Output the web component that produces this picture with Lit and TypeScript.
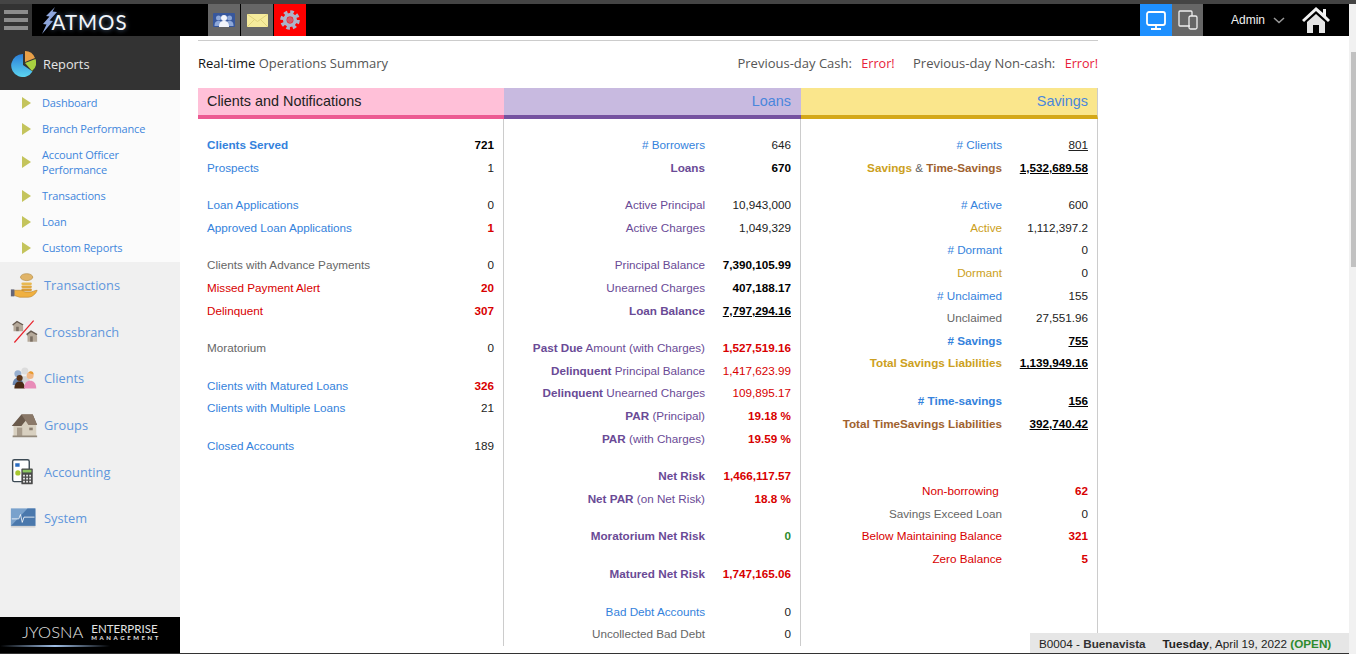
import { LitElement, html, css, svg } from 'lit'
import { customElement } from 'lit/decorators.js'

type Part = [string, string?]
type Row = { label?: Part[]; value?: string; v?: string; gap?: number }

const L = (text: string, cls = ''): Part[] => [[text, cls]]
const gap = (n = 1): Row => ({ gap: n })

const clients: Row[] = [
  { label: L('Clients Served', 'blue b'), value: '721', v: 'b' },
  { label: L('Prospects', 'blue'), value: '1' },
  gap(),
  { label: L('Loan Applications', 'blue'), value: '0' },
  { label: L('Approved Loan Applications', 'blue'), value: '1', v: 'red b' },
  gap(),
  { label: L('Clients with Advance Payments', 'gray'), value: '0' },
  { label: L('Missed Payment Alert', 'red'), value: '20', v: 'red b' },
  { label: L('Delinquent', 'red'), value: '307', v: 'red b' },
  gap(),
  { label: L('Moratorium', 'gray'), value: '0' },
  gap(),
  { label: L('Clients with Matured Loans', 'blue'), value: '326', v: 'red b' },
  { label: L('Clients with Multiple Loans', 'blue'), value: '21' },
  gap(),
  { label: L('Closed Accounts', 'blue'), value: '189' },
]

const loans: Row[] = [
  { label: L('# Borrowers', 'blue'), value: '646' },
  { label: L('Loans', 'purple b'), value: '670', v: 'b' },
  gap(),
  { label: L('Active Principal', 'purple'), value: '10,943,000' },
  { label: L('Active Charges', 'purple'), value: '1,049,329' },
  gap(),
  { label: L('Principal Balance', 'purple'), value: '7,390,105.99', v: 'b' },
  { label: L('Unearned Charges', 'purple'), value: '407,188.17', v: 'b' },
  { label: L('Loan Balance', 'purple b'), value: '7,797,294.16', v: 'b u' },
  gap(),
  { label: [['Past Due', 'purple b'], [' Amount (with Charges)', 'purple']], value: '1,527,519.16', v: 'red b' },
  { label: [['Delinquent', 'purple b'], [' Principal Balance', 'purple']], value: '1,417,623.99', v: 'red' },
  { label: [['Delinquent', 'purple b'], [' Unearned Charges', 'purple']], value: '109,895.17', v: 'red' },
  { label: [['PAR', 'purple b'], [' (Principal)', 'purple']], value: '19.18 %', v: 'red b' },
  { label: [['PAR', 'purple b'], [' (with Charges)', 'purple']], value: '19.59 %', v: 'red b' },
  gap(),
  { label: L('Net Risk', 'purple b'), value: '1,466,117.57', v: 'red b' },
  { label: [['Net PAR', 'purple b'], [' (on Net Risk)', 'purple']], value: '18.8 %', v: 'red b' },
  gap(),
  { label: L('Moratorium Net Risk', 'purple b'), value: '0', v: 'green b' },
  gap(),
  { label: L('Matured Net Risk', 'purple b'), value: '1,747,165.06', v: 'red b' },
  gap(),
  { label: L('Bad Debt Accounts', 'blue'), value: '0' },
  { label: L('Uncollected Bad Debt', 'gray'), value: '0' },
]

const savings: Row[] = [
  { label: L('# Clients', 'blue'), value: '801', v: 'u' },
  { label: [['Savings', 'gold b'], [' & ', 'gray'], ['Time-Savings', 'brown b']], value: '1,532,689.58', v: 'b u' },
  gap(),
  { label: L('# Active', 'blue'), value: '600' },
  { label: L('Active', 'gold'), value: '1,112,397.2' },
  { label: L('# Dormant', 'blue'), value: '0' },
  { label: L('Dormant', 'gold'), value: '0' },
  { label: L('# Unclaimed', 'blue'), value: '155' },
  { label: L('Unclaimed', 'gray'), value: '27,551.96' },
  { label: L('# Savings', 'blue b'), value: '755', v: 'b u' },
  { label: L('Total Savings Liabilities', 'gold b'), value: '1,139,949.16', v: 'b u' },
  gap(),
  { label: L('# Time-savings', 'blue b'), value: '156', v: 'b u' },
  { label: L('Total TimeSavings Liabilities', 'brown b'), value: '392,740.42', v: 'b u' },
  gap(3),
  { label: L('Non-borrowing\u00a0', 'red'), value: '62', v: 'red b' },
  { label: L('Savings Exceed Loan', 'gray'), value: '0' },
  { label: L('Below Maintaining Balance', 'red'), value: '321', v: 'red b' },
  { label: L('Zero Balance', 'red'), value: '5', v: 'red b' },
]

const subItems = ['Dashboard', 'Branch Performance', 'Account Officer Performance', 'Transactions', 'Loan', 'Custom Reports']

const navIcons: Record<string, unknown> = {
  Transactions: svg`
    <ellipse cx="19" cy="5" rx="7" ry="4" fill="#e0b468" stroke="#b08840" stroke-width=".7"/>
    <rect x="13" y="11" width="12" height="3" rx="1.500" fill="#e8b850"/>
    <rect x="13" y="14.500" width="12" height="3" rx="1.500" fill="#e0a840"/>
    <rect x="13" y="18" width="12" height="3" rx="1.500" fill="#d89c38"/>
    <path d="M5 20h7c3 0 4 2 6 2h5c3 0 5-2 8-2-1 4-6 8-10 8H11l-6-2z" fill="#f0b040" stroke="#b07820" stroke-width=".6"/>
    <rect x="1" y="19" width="4" height="8" fill="#667"/>`,
  Crossbranch: svg`
    <path d="M3 6l5-4 6 3 1 3v5H4V7z" fill="#b5a99a"/><path d="M3 6l5-4 7 4" fill="none" stroke="#665a50" stroke-width="1.600"/>
    <rect x="7" y="8" width="3" height="5" fill="#7a6e62"/>
    <path d="M19 17l5-4 6 3 1 3v6H20v-6z" fill="#b5a99a"/><path d="M19 17l5-4 7 4" fill="none" stroke="#665a50" stroke-width="1.600"/>
    <rect x="23" y="19" width="3" height="6" fill="#7a6e62"/>
    <path d="M5 26L27 1" stroke="#e8202a" stroke-width="1.400"/>`,
  Clients: svg`
    <circle cx="17" cy="6" r="4" fill="#dcdcdc"/><path d="M11 20c0-6 3-8 6-8s6 2 6 8z" fill="#d4d4d4"/>
    <circle cx="9" cy="9" r="4" fill="#98b0d0"/><path d="M3 22c0-6 3-8 6-8s6 2 6 8z" fill="#6a85ad"/>
    <circle cx="11" cy="14" r="3.500" fill="#5c3418"/><path d="M5 26c0-6 3-8 6-8s6 2 6 8z" fill="#4a2a14"/>
    <circle cx="23" cy="11" r="4" fill="#f0b888"/><path d="M21 8c2-3 6-2 6 2l-3-1z" fill="#e89a30"/>
    <path d="M16 26c0-6 3-9 7-9s7 3 7 9z" fill="#e88cb8"/>`,
  Groups: svg`
    <path d="M4 14L14 2h12l4 12v13H4z" fill="#d8d0c0"/>
    <path d="M2 15L13 2h13l5 12-4-1-5-9-9 11z" fill="#6a5a4c"/>
    <path d="M13 2h13l5 12H21z" fill="#8a7868"/>
    <rect x="8" y="17" width="6" height="10" fill="#a89c8c"/>
    <rect x="22" y="17" width="4" height="3" fill="#8a7e70"/>
    <rect x="3" y="26" width="28" height="2" fill="#948a7c"/>`,
  Accounting: svg`
    <rect x="3" y="0" width="19" height="25" rx="2" fill="#fff" stroke="#3c4a54" stroke-width="1.600"/>
    <rect x="6" y="4" width="5" height="4" fill="#2a6cc0"/>
    <circle cx="9" cy="15" r="3" fill="#a8c830"/>
    <rect x="13" y="10" width="13" height="18" rx="1" fill="#4a4a4a"/>
    <rect x="14.500" y="11.500" width="10" height="3" fill="#8cc860"/>
    <path d="M15 17h2v2h-2zM18.500 17h2v2h-2zM22 17h2v2h-2zM15 20.500h2v2h-2zM18.500 20.500h2v2h-2zM22 20.500h2v2h-2zM15 24h2v2h-2zM18.500 24h2v2h-2zM22 24h2v2h-2z" fill="#eee"/>`,
  System: svg`
    <rect x="1" y="3" width="28" height="20" fill="#7aa2cc"/>
    <path d="M1 23L20 3h9v20z" fill="#4a78ac"/>
    <path d="M2 15h8l2-5 2 9 2-6h12" fill="none" stroke="#fff" stroke-width=".9"/>
    <rect x="1" y="23" width="28" height="2" fill="#d4d4d4"/>`,
}

@customElement('app-root')
export class AppRoot extends LitElement {
  static styles = css`
    :host {
      display: flex;
      flex-direction: column;
      height: 654px;
      overflow: hidden;
      position: relative;
      background: #fff;
      font-family: 'Liberation Sans', Arial, sans-serif;
      font-size: 11.7px;
      color: #222;
    }

    .top-line {
      height: 4px;
      background: #444;
      flex: none;
    }

    .frame {
      flex: 1;
      display: flex;
      min-height: 0;
    }

    .page {
      flex: 1;
      display: flex;
      flex-direction: column;
      min-width: 0;
      border-bottom: 1px solid #333;
    }

    /* top bar */
    .topbar {
      height: 32px;
      flex: none;
      display: flex;
      align-items: stretch;
      background: #000;
    }

    .burger {
      width: 32px;
      background: #333;
      display: flex;
      flex-direction: column;
      justify-content: center;
      gap: 4px;
      padding: 0 4px;
      box-sizing: border-box;
    }

    .burger span {
      height: 4px;
      background: #8c8c8c;
    }

    .logo {
      width: 176px;
      display: flex;
      align-items: center;
      padding-left: 10px;
      box-sizing: border-box;
    }

    .logo-text {
      font-family: 'Lato', sans-serif;
      font-size: 20.5px;
      color: #f2f5fa;
      letter-spacing: 1px;
      margin-left: -5.5px;
      padding-top: 3px;
      text-shadow: 0 0 5px rgba(120, 150, 190, 0.8);
    }

    .tool {
      width: 32px;
      margin-right: 1px;
      background: #666;
      display: flex;
      align-items: center;
      justify-content: center;
    }

    .tool.alert {
      background: #f00;
    }

    .tool.on {
      background: #1e90ff;
      margin-right: 0;
    }

    .tool.narrow {
      width: 31px;
    }

    .spacer {
      flex: 1;
    }

    .admin {
      margin-left: 27px;
      width: 71px;
      display: flex;
      align-items: center;
      color: #f2f2f2;
      font-size: 12px;
      gap: 8px;
    }

    .home {
      width: 47px;
      display: flex;
      align-items: center;
    }

    /* body */
    .body {
      flex: 1;
      display: flex;
      min-height: 0;
    }

    .sidebar {
      width: 180px;
      flex: none;
      display: flex;
      flex-direction: column;
      background: #f0f0f0;
      font-family: 'Open Sans', sans-serif;
    }

    .section {
      height: 54px;
      flex: none;
      background: #333;
      color: #e6e6e6;
      display: flex;
      align-items: center;
      gap: 7px;
      padding: 1px 0 0 11px;
      box-sizing: border-box;
      font-size: 12.8px;
    }

    .subs {
      flex: none;
      background: #fbfbfb;
      padding-bottom: 1px;
    }

    .sub {
      display: flex;
      align-items: center;
      padding: 5px 10px 6px 22px;
      gap: 11px;
      font-size: 11px;
      letter-spacing: -0.15px;
      line-height: 15px;
      color: #3f86dc;
    }

    .tri {
      width: 0;
      height: 0;
      flex: none;
      border-left: 9px solid #c4c45c;
      border-top: 6px solid transparent;
      border-bottom: 6px solid transparent;
    }

    .nav {
      height: 46.6px;
      display: flex;
      align-items: center;
      padding-left: 10px;
      gap: 6px;
      font-size: 12.8px;
      color: #5f96dc;
      box-sizing: border-box;
    }

    .brand {
      margin-top: auto;
      height: 36px;
      flex: none;
      background: #000;
      color: #e4e4e4;
      display: flex;
      align-items: flex-start;
      gap: 8px;
      padding: 5px 0 0 22px;
      box-sizing: border-box;
      font-family: 'Lato', sans-serif;
      font-weight: 300;
      position: relative;
    }

    .brand-name {
      font-size: 16.5px;
      line-height: 20px;
    }

    .brand-sub {
      font-size: 11.5px;
      font-weight: 400;
      line-height: 12px;
      padding-top: 1px;
    }

    .brand-sub small {
      display: block;
      font-size: 6px;
      font-weight: bold;
      letter-spacing: 2.6px;
      line-height: 6px;
    }

    .brand-glow {
      position: absolute;
      left: 0;
      bottom: 6px;
      width: 110px;
      height: 2px;
      background: linear-gradient(90deg, #000, #a0c0e8 50%, #000);
    }

    /* main content */
    .main {
      flex: 1;
      min-width: 0;
      padding: 4px 0 0 18px;
    }

    .content {
      width: 900px;
      border-top: 1px solid #ccc;
    }

    .summary {
      height: 47px;
      display: flex;
      align-items: flex-start;
      justify-content: space-between;
      padding-top: 13px;
      box-sizing: border-box;
      font-family: 'Open Sans', sans-serif;
      font-size: 13px;
      line-height: 18px;
      color: #555;
    }

    .summary b {
      font-weight: 400;
      color: #111;
    }

    .summary em {
      font-style: normal;
      font-size: 12.6px;
      color: #e8203a;
      margin: 0 15px 0 6px;
    }

    .summary em:last-child {
      margin-right: 0;
    }

    .columns {
      display: grid;
      grid-template-columns: 306px 297px 297px;
    }

    .head {
      height: 31px;
      box-sizing: border-box;
      border-bottom: 4px solid;
      display: flex;
      align-items: center;
      justify-content: flex-end;
      padding: 0 10px 2px 9px;
      font-size: 14.4px;
      color: #4a86dc;
    }

    .head.pink {
      background: #ffc0d8;
      border-color: #ec5a92;
      justify-content: flex-start;
      color: #222;
    }

    .head.lilac {
      background: #c8bae0;
      border-color: #7552a0;
    }

    .head.yellow {
      background: #fae68c;
      border-color: #d4a818;
      border-right: 1px solid #ccc;
      padding-right: 9px;
    }

    .col {
      height: 527px;
      padding: 14.3px 9px 0;
      box-sizing: border-box;
      border-right: 1px solid #ccc;
    }

    .row {
      height: 22.6px;
      display: flex;
      align-items: center;
      justify-content: space-between;
      white-space: pre;
    }

    .col.right .row {
      justify-content: flex-end;
    }

    .col.right .val {
      width: 86px;
      text-align: right;
    }

    .val {
      color: #222;
    }

    .val.b, .val.b.u {
      color: #000;
    }

    .b {
      font-weight: bold;
    }

    .u {
      text-decoration: underline;
    }

    .blue { color: #3482dc; }
    .gray { color: #666; }
    .red, .val.red { color: #d80000; }
    .purple { color: #6a4a96; }
    .gold { color: #cca020; }
    .brown { color: #a0622e; }
    .green, .val.green { color: #2e8b2e; }

    .scrollbar {
      width: 7px;
      flex: none;
      background: #f1f1f1;
      padding: 48px 0 0 2px;
      box-sizing: border-box;
    }

    .thumb {
      height: 215px;
      background: #c1c1c1;
    }

    .status {
      position: absolute;
      right: 7px;
      bottom: 1px;
      width: 319px;
      height: 20px;
      box-sizing: border-box;
      background: #e6e6e6;
      padding-left: 9px;
      display: flex;
      align-items: center;
      gap: 17px;
      color: #222;
      white-space: pre;
    }

    .status .green {
      font-weight: bold;
    }

    .status .name {
      font-weight: bold;
      color: #333;
    }
  `

  private renderRows(rows: Row[]) {
    return rows.map((r) => {
      if (r.gap) return html`<div style="height:${r.gap * 15}px"></div>`
      return html`<div class="row">
        <span>${(r.label ?? []).map(([t, c]) => html`<span class=${c ?? ''}>${t}</span>`)}</span>
        <span class="val ${r.v ?? ''}">${r.value}</span>
      </div>`
    })
  }

  render() {
    return html`
      <div class="top-line"></div>
      <div class="frame">
        <div class="page">
          <div class="topbar">
            <div class="burger"><span></span><span></span><span></span></div>
            <div class="logo">
              <svg width="15" height="27" viewBox="0 0 15 27"><path d="M13 0L4 9l3.500.5L1 17l3.500.5L0 27 11 14l-3.500-.5L15 5l-4.500-.5z" fill="#8ea6dc"/></svg>
              <span class="logo-text">ATMOS</span>
            </div>
            <div class="tool">
              <svg width="22" height="14" viewBox="0 0 22 14">
                <rect width="22" height="14" rx="1" fill="#37579c"/>
                <circle cx="5.500" cy="5" r="2.500" fill="#8ea8d8"/><path d="M1.500 13c0-4 1.500-5 4-5s4 1 4 5z" fill="#8ea8d8"/>
                <circle cx="16.500" cy="5" r="2.500" fill="#8ea8d8"/><path d="M12.500 13c0-4 1.500-5 4-5s4 1 4 5z" fill="#8ea8d8"/>
                <circle cx="11" cy="5" r="3" fill="#f4f6fc"/><path d="M6 14c0-5 2-6 5-6s5 1 5 6z" fill="#f4f6fc"/>
              </svg>
            </div>
            <div class="tool">
              <svg width="21" height="13" viewBox="0 0 21 13">
                <rect width="21" height="13" fill="#f5eb9c"/>
                <path d="M0 0l10.500 7.500L21 0M0 13l7.500-7.500M21 13l-7.500-7.500" fill="none" stroke="#dfd27c" stroke-width="1"/>
              </svg>
            </div>
            <div class="tool alert">
              <svg width="20" height="20" viewBox="0 0 20 20" fill="none">
                <circle cx="10" cy="10" r="8" stroke="#aab4ca" stroke-width="3.600" stroke-dasharray="3.500 2.780"/>
                <circle cx="10" cy="10" r="5.200" stroke="#aab4ca" stroke-width="3.600"/>
                <circle cx="10" cy="10" r="3" fill="#d85868"/>
              </svg>
            </div>
            <div class="spacer"></div>
            <div class="tool on">
              <svg width="22" height="22" viewBox="0 0 22 22" fill="none" stroke="#fff">
                <rect x="2" y="3" width="18" height="13" rx="2" stroke-width="1.800"/>
                <path d="M11 16v3M6 20h10" stroke-width="1.800"/>
              </svg>
            </div>
            <div class="tool narrow">
              <svg width="22" height="22" viewBox="0 0 22 22" fill="none" stroke="#eee" stroke-width="1.300">
                <path d="M13 17H3a1 1 0 0 1-1-1V3a1 1 0 0 1 1-1h11a1 1 0 0 1 1 1v4"/>
                <rect x="12" y="7" width="8" height="13" rx="1.500"/>
              </svg>
            </div>
            <div class="admin">
              <span>Admin</span>
              <svg width="12" height="7" viewBox="0 0 12 7"><path d="M1 1l5 4.500L11 1" fill="none" stroke="#999" stroke-width="1.500"/></svg>
            </div>
            <div class="home">
              <svg width="29" height="28" viewBox="0 0 29 28">
                <path d="M14 1L0 14l2 2L14 5l12 11 2-2-4-4V3h-3v4z" fill="#f2f2f2"/>
                <path d="M5 16l9-8 9 8v11h-6v-8h-6v8H5z" fill="#e4e4e4"/>
              </svg>
            </div>
          </div>

          <div class="body">
            <aside class="sidebar">
              <div class="section">
                <svg width="25" height="27" viewBox="0 0 25 27">
                  <defs>
                    <linearGradient id="pie" x1="0" y1="0" x2="0" y2="1">
                      <stop offset="0" stop-color="#2a7ed8"/>
                      <stop offset="1" stop-color="#5cd4f0"/>
                    </linearGradient>
                  </defs>
                  <path d="M12 15V4a11.500 11.500 0 1 0 9.500 17.500z" fill="url(#pie)"/>
                  <path d="M14 12V1a11 11 0 0 1 10 7z" fill="#e8a048"/>
                  <path d="M14 13l10.500-4a11 11 0 0 1-3.500 12z" fill="#a8d040"/>
                </svg>
                <span>Reports</span>
              </div>
              <div class="subs">
                ${subItems.map((s) => html`<div class="sub"><span class="tri"></span><span>${s}</span></div>`)}
              </div>
              ${Object.keys(navIcons).map((n) => html`
                <div class="nav">
                  <svg width="28" height="28" viewBox="0 0 32 28">${navIcons[n]}</svg>
                  <span>${n}</span>
                </div>`)}
              <div class="brand">
                <span class="brand-name">JYOSNA</span>
                <span class="brand-sub">ENTERPRISE<small>MANAGEMENT</small></span>
                <span class="brand-glow"></span>
              </div>
            </aside>

            <main class="main">
              <div class="content">
                <div class="summary">
                  <span><b>Real-time</b> Operations Summary</span>
                  <span>Previous-day Cash: <em>Error!</em> Previous-day Non-cash: <em>Error!</em></span>
                </div>
                <div class="columns">
                  <div class="head pink">Clients and Notifications</div>
                  <div class="head lilac">Loans</div>
                  <div class="head yellow">Savings</div>
                  <div class="col">${this.renderRows(clients)}</div>
                  <div class="col right">${this.renderRows(loans)}</div>
                  <div class="col right">${this.renderRows(savings)}</div>
                </div>
              </div>
            </main>
          </div>
        </div>
        <div class="scrollbar"><div class="thumb"></div></div>
      </div>
      <div class="status">
        <span>B0004 - <span class="name">Buenavista</span></span>
        <span><b>Tuesday</b>, April 19, 2022 <span class="green">(OPEN)</span></span>
      </div>
    `
  }
}
